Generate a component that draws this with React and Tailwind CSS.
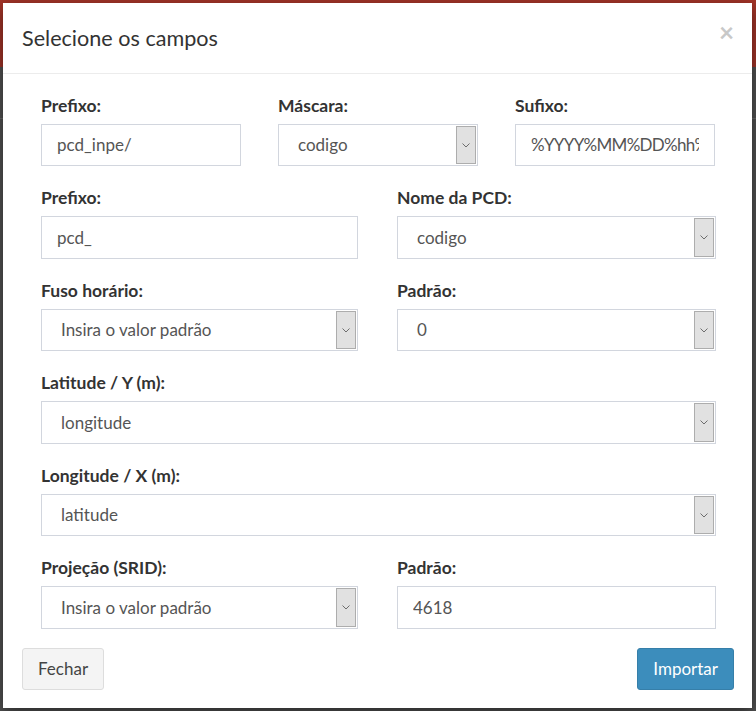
import React from "react";

const font = { fontFamily: "Lato, 'Noto Sans', sans-serif" };

function Chevron() {
  return (
    <svg width="8" height="5" viewBox="0 0 8 5" fill="none">
      <path d="M0.5 0.5 L4 4 L7.5 0.5" stroke="#606060" strokeWidth="0.9" />
    </svg>
  );
}

function Field({ label, children }) {
  return (
    <div className="mb-[18.75px]">
      <div className="text-[17.5px] font-bold leading-[25px] mb-[6.25px] text-[#333]">{label}</div>
      {children}
    </div>
  );
}

function Input({ value, tight }) {
  return (
    <div className="h-[42.5px] border border-[#d2d6de] flex items-center px-[15px] text-[17px] text-[#555] bg-white">
      <div className={tight ? "overflow-hidden whitespace-nowrap w-full tracking-[-0.7px]" : "overflow-hidden whitespace-nowrap w-full"}>
        {value}
      </div>
    </div>
  );
}

function Select({ value }) {
  return (
    <div className="h-[42.5px] border border-[#d2d6de] flex bg-white">
      <div className="flex-1 flex items-center pl-[19px] text-[17px] text-[#555] whitespace-nowrap overflow-hidden">
        {value}
      </div>
      <div className="my-px mr-px w-[20px] bg-[#e1e1e1] border border-[#adadad] flex items-center justify-center">
        <Chevron />
      </div>
    </div>
  );
}

export default function App() {
  return (
    <div className="relative w-[756px] h-[711px] overflow-hidden bg-[#525252]" style={font}>
      <div className="h-[67px] bg-[#a33428]" />
      <div className="h-px mt-[51px] bg-[#6a6a6a]" />
      <div className="absolute left-[3px] top-[3px] w-[749px] h-[705px] bg-white shadow-[0_5px_15px_rgba(0,0,0,0.5)] flex flex-col">
        <div className="h-[71px] px-[19px] flex items-center justify-between border-b border-[#ececec]">
          <div className="text-[21.6px] text-[#333] leading-none pt-[2px]">Selecione os campos</div>
          <div className="self-start mt-[16px] mr-[-1px] text-[26px] font-bold leading-none text-[#c8c8c8]">×</div>
        </div>
        <div className="pt-[18.5px] pl-[38px] pr-[36px]">
          <div className="grid grid-cols-[200px_200px_200px] gap-x-[37px]">
            <Field label="Prefixo:"><Input value="pcd_inpe/" /></Field>
            <Field label="Máscara:"><Select value="codigo" /></Field>
            <Field label="Sufixo:"><Input value="%YYYY%MM%DD%hh%" tight /></Field>
          </div>
          <div className="grid grid-cols-[317px_319px] justify-between">
            <Field label="Prefixo:"><Input value="pcd_" /></Field>
            <Field label="Nome da PCD:"><Select value="codigo" /></Field>
          </div>
          <div className="grid grid-cols-[317px_319px] justify-between">
            <Field label="Fuso horário:"><Select value="Insira o valor padrão" /></Field>
            <Field label="Padrão:"><Select value="0" /></Field>
          </div>
          <Field label="Latitude / Y (m):"><Select value="longitude" /></Field>
          <Field label="Longitude / X (m):"><Select value="latitude" /></Field>
          <div className="grid grid-cols-[317px_319px] justify-between">
            <Field label="Projeção (SRID):"><Select value="Insira o valor padrão" /></Field>
            <Field label="Padrão:"><Input value="4618" /></Field>
          </div>
        </div>
        <div className="px-[19px] pr-[18px] flex justify-between">
          <div className="h-[42.5px] px-[15px] flex items-center rounded-[3px] border border-[#ddd] bg-[#f4f4f4] text-[17px] text-[#444]">
            Fechar
          </div>
          <div className="h-[42.5px] px-[15px] flex items-center rounded-[3px] border border-[#367fa9] bg-[#3c8dbc] text-[17px] text-white">
            Importar
          </div>
        </div>
      </div>
    </div>
  );
}
